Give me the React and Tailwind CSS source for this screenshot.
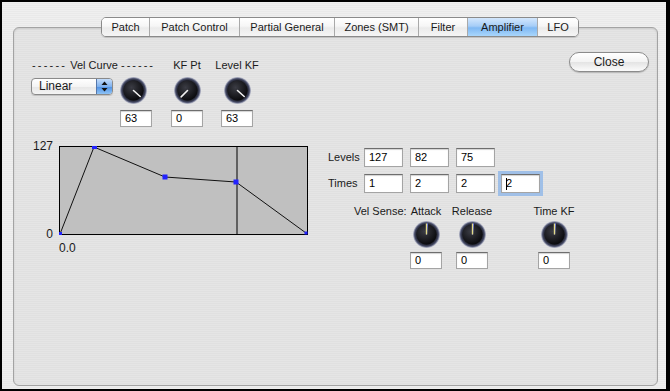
import { useId } from "react"

const tabs = [
  { name: "Patch", w: "w-[47px]" },
  { name: "Patch Control", w: "w-[90px]" },
  { name: "Partial General", w: "w-[95px]" },
  { name: "Zones (SMT)", w: "w-[84px]" },
  { name: "Filter", w: "w-[49px]" },
  { name: "Amplifier", w: "w-[70px]", active: true },
  { name: "LFO", w: "w-[41px]" },
]

const Knob = ({ angle, bottom }) => {
  const id = useId().replace(/:/g, "")
  const rad = (angle * Math.PI) / 180
  const len = bottom ? 11 : 9
  const x2 = 13.5 + Math.sin(rad) * len
  const y2 = 13.5 - Math.cos(rad) * len
  return (
    <svg width="27" height="27" viewBox="0 0 27 27" className="block">
      <defs>
        <radialGradient id={`rim${id}`} cx="50%" cy="50%" r="50%">
          <stop offset="70%" stopColor="#17181f" />
          <stop offset="88%" stopColor="#464b66" />
          <stop offset="100%" stopColor="#8a90b0" stopOpacity="0.45" />
        </radialGradient>
        <radialGradient id={`cap${id}`} cx="40%" cy="35%" r="65%">
          <stop offset="0%" stopColor="#3b3c44" />
          <stop offset="100%" stopColor="#0b0b0e" />
        </radialGradient>
      </defs>
      <circle cx="13.5" cy="13.5" r="13.5" fill={`url(#rim${id})`} />
      <circle cx="13.5" cy="13.5" r="10" fill={`url(#cap${id})`} />
      {bottom ? (
        <>
          <line x1="13.5" y1="13.5" x2={x2 + 1} y2={y2} stroke="#5a6cff" strokeWidth="1" />
          <line x1="13.5" y1="13.5" x2={x2} y2={y2} stroke="#e4dc8a" strokeWidth="1.4" />
        </>
      ) : (
        <line x1="13.5" y1="13.5" x2={x2} y2={y2} stroke="#f2f2f2" strokeWidth="1.6" strokeLinecap="round" />
      )}
    </svg>
  )
}

const Box = ({ value, w = "w-[32px]", h = "h-[17px]", focused }) => (
  <div
    className={`${w} ${h} bg-white border border-[#a4a4a4] border-t-[#6e6e6e] shadow-[inset_0_1px_1px_rgba(0,0,0,0.18)] pl-[4px] flex items-center text-[11px] text-black leading-none ${
      focused ? "ring-[3px] ring-[#8fb7e8]/80 border-[#5d8fd0]" : ""
    }`}
  >
    {focused && <span className="w-px h-[12px] bg-black -mr-px" />}
    {value}
  </div>
)

const KnobCol = ({ label, value, angle, bottom }) => (
  <div className="w-[32px] flex flex-col items-center">
    <span className="whitespace-nowrap leading-[14px]">{label}</span>
    <div className={bottom ? "mt-[3px]" : "mt-[5px]"}>
      <Knob angle={angle} bottom={bottom} />
    </div>
    <div className={bottom ? "mt-[4px]" : "mt-[6px]"}>
      <Box value={value} />
    </div>
  </div>
)

const Graph = () => (
  <div className="flex items-start">
    <div className="w-[22px] h-[102px] flex flex-col justify-between text-right leading-[14px] text-[12px]">
      <span>127</span>
      <span>0</span>
    </div>
    <div className="ml-[6px] mt-[7px] flex flex-col">
      <div className="w-[249px] h-[89px] border border-black bg-[#c0c0c0]">
        <svg width="247" height="87" viewBox="0 0 247 87" className="block overflow-visible">
          <line x1="177" y1="0" x2="177" y2="87" stroke="#000" strokeWidth="1" />
          <polyline points="0,87 34,0 105,30 176,35 246,86" fill="none" stroke="#111" strokeWidth="1" />
          <rect x="-1" y="85" width="3" height="3" fill="#2222ff" />
          <rect x="32" y="-1" width="5" height="3" fill="#2222ff" />
          <rect x="102.5" y="27.5" width="5" height="5" fill="#2222ff" />
          <rect x="173.5" y="32.5" width="5" height="5" fill="#2222ff" />
          <rect x="244.5" y="84.5" width="3" height="3" fill="#2222ff" />
        </svg>
      </div>
      <span className="mt-[6px] text-[12px] leading-[14px]">0.0</span>
    </div>
  </div>
)

const App = () => {
  return (
    <div className="w-[670px] h-[391px] border-l-2 border-t-2 border-b-2 border-r-4 border-black bg-[#ececec] bg-[repeating-linear-gradient(0deg,#efefef_0px,#efefef_1px,#e9e9e9_1px,#e9e9e9_2px)] font-['Liberation_Sans',Arial,sans-serif] text-[11px] text-[#1a1a1a] pt-[15px] overflow-hidden">
      <div className="relative z-10 pl-[99px] flex">
        <div className="flex h-[20px] rounded-[5px] border border-[#8a8a8a] overflow-hidden shadow-[0_1px_1px_rgba(0,0,0,0.15)]">
          {tabs.map((t, i) => (
            <div
              key={t.name}
              className={`${t.w} flex items-center justify-center ${i > 0 ? "border-l border-[#a9a9a9]" : ""} ${
                t.active
                  ? "bg-[linear-gradient(#d3e7fd,#a6cdf7_45%,#7fb8f3_55%,#a9d6fb)]"
                  : "bg-[linear-gradient(#ffffff,#f6f6f6_45%,#ebebeb_55%,#f5f5f5)]"
              }`}
            >
              {t.name}
            </div>
          ))}
        </div>
      </div>

      <div className="-mt-[10px] ml-[11px] w-[645px] h-[359px] rounded-[6px] border border-[#a3a3a3] bg-[#e3e3e3] bg-[repeating-linear-gradient(0deg,#e5e5e5_0px,#e5e5e5_1px,#e0e0e0_1px,#e0e0e0_2px)] shadow-[inset_0_1px_2px_rgba(0,0,0,0.12)] pt-[24px] pl-[17px] pr-[8px]">
        <div className="flex justify-between items-start">
          <div className="flex items-start mt-[6px]">
            <div className="w-[121px] flex flex-col">
              <span className="leading-[14px] whitespace-nowrap pl-[1px]">
                <span className="tracking-[2.2px]">------</span> Vel Curve <span className="tracking-[2px]">------</span>
              </span>
              <div className="flex items-start mt-[5px]">
                <div className="mt-[1px] w-[82px] h-[17px] rounded-[4px] border border-[#8a8a8a] bg-[linear-gradient(#ffffff,#f4f4f4_50%,#e6e6e6_51%,#f4f4f4)] flex overflow-hidden shadow-[0_1px_1px_rgba(0,0,0,0.15)]">
                  <span className="flex-1 pl-[7px] leading-[15px] text-[12px]">Linear</span>
                  <div className="w-[16px] bg-[linear-gradient(#c3dcfa,#7fb1ee_50%,#4d8fe3_51%,#8ec3f6)] border-l border-[#5577aa] flex items-center justify-center">
                    <svg width="7" height="11" viewBox="0 0 7 11">
                      <path d="M3.5 0.5 L6.5 4 L0.5 4 Z" fill="#111" />
                      <path d="M3.5 10.5 L6.5 7 L0.5 7 Z" fill="#111" />
                    </svg>
                  </div>
                </div>
                <div className="ml-[7px] flex flex-col">
                  <Knob angle={132} />
                  <div className="mt-[6px]">
                    <Box value="63" />
                  </div>
                </div>
              </div>
            </div>
            <div className="ml-[19px]">
              <KnobCol label="KF Pt" value="0" angle={-135} />
            </div>
            <div className="ml-[18px]">
              <KnobCol label="Level KF" value="63" angle={132} />
            </div>
          </div>
          <div className="w-[80px] h-[20px] rounded-full border border-[#8b8b8b] bg-[linear-gradient(#ffffff,#f3f3f3_50%,#e4e4e4_52%,#fbfbfb)] shadow-[0_1px_1px_rgba(0,0,0,0.2)] flex items-center justify-center text-[12px]">
            Close
          </div>
        </div>

        <div className="flex items-start mt-[12px]">
          <Graph />
          <div className="ml-[20px] mt-[9px] flex flex-col">
            <div className="flex items-center">
              <span className="w-[36px]">Levels</span>
              <div className="flex gap-[7px]">
                <Box value="127" w="w-[39px]" h="h-[19px]" />
                <Box value="82" w="w-[39px]" h="h-[19px]" />
                <Box value="75" w="w-[39px]" h="h-[19px]" />
              </div>
            </div>
            <div className="flex items-center mt-[7px]">
              <span className="w-[36px]">Times</span>
              <div className="flex gap-[7px]">
                <Box value="1" w="w-[39px]" h="h-[19px]" />
                <Box value="2" w="w-[39px]" h="h-[19px]" />
                <Box value="2" w="w-[39px]" h="h-[19px]" />
              </div>
              <div className="ml-[6px]">
                <Box value="2" w="w-[39px]" h="h-[19px]" focused />
              </div>
            </div>
            <div className="flex items-start mt-[11px] ml-[26px]">
              <span className="w-[56px] leading-[14px] whitespace-nowrap">Vel Sense:</span>
              <KnobCol label="Attack" value="0" angle={0} bottom />
              <div className="ml-[14px]">
                <KnobCol label="Release" value="0" angle={0} bottom />
              </div>
              <div className="ml-[50px]">
                <KnobCol label="Time KF" value="0" angle={0} bottom />
              </div>
            </div>
          </div>
        </div>
      </div>
    </div>
  )
}

export default App
